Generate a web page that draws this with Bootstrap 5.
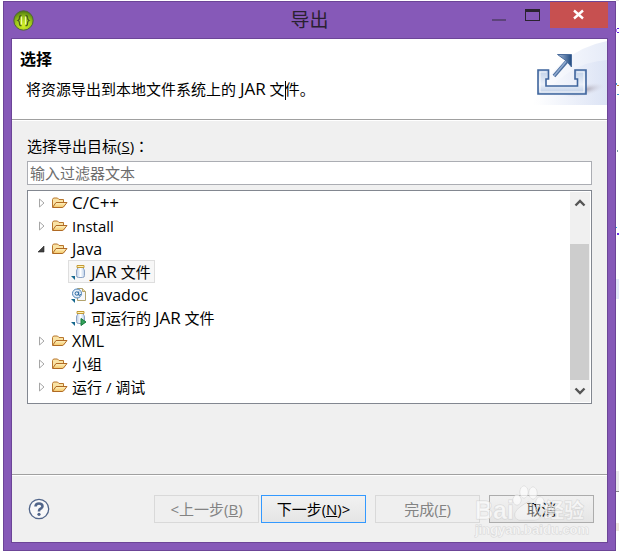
<!DOCTYPE html>
<html lang="zh-CN">
<head>
<meta charset="utf-8">
<meta name="viewport" content="width=device-width, initial-scale=1">
<title>导出</title>
<link href="https://cdn.jsdelivr.net/npm/bootstrap@5.3.0/dist/css/bootstrap.min.css" rel="stylesheet">
<style>
  body { font: 15px/20px "Open Sans", "Noto Sans CJK SC", sans-serif; color: #000; background: #fff; padding: 1px 3px; }
  .latin { font-size: 16px; }
  .caps { font-size: 17px; }
  .wide-colon { font-family: "Noto Sans CJK TC", sans-serif; }
  .window-frame { background: #8659b8; border: 1px solid #6c4597; min-height: calc(100vh - 2px); padding: 0 7px 7px; }
  .title-bar { height: 36px; }
  .app-icon { margin: 8px 0 0 2px; }
  .window-title { font-size: 19px; line-height: 36px; color: #2a2130; }
  .win-controls { height: 26px; }
  .win-controls button { border: 0; padding: 0; background: none; width: 34px; }
  .win-controls .close-btn { background: #c75050; width: 58px; }
  .client-area { border: 1px solid #6c4597; background: #f0f0f0; }
  .banner { background: #fff; border-bottom: 1px solid #a0a0a0; height: 81px; box-shadow: 0 1px #fff; }
  .banner h1 { font-size: 16px; line-height: 20px; margin: 10px 0 10px 8px; font-weight: 700; }
  .banner p { margin-left: 14px; }
  .caret { width: 1px; height: 19px; background: #000; vertical-align: middle; margin-right: -1px; }
  .wizard-body { padding: 16px 15px 0; }
  .filter-label { margin-bottom: 5px; }
  .filter-box { height: 24px; border: 1px solid #abadb3; border-radius: 0; padding: 0 2px; font-size: 15px; line-height: 20px; background: #fff; color: #6d6d6d; }
  .filter-box::placeholder { color: #6d6d6d; }
  .tree-box { border: 1px solid #828790; background: #fff; padding: 0 1px 1px 0; margin-top: 5px; }
  .tree-list li > .tree-row { height: 23px; padding-left: 8px; }
  .tree-row .toggle { border: 0; background: none; padding: 0; width: 12px; height: 23px; margin-right: 3px; }
  .tree-row svg { flex: none; display: block; }
  .tree-row .node-label { margin-left: 4px; white-space: nowrap; }
  .leaf { height: 23px; margin-left: 40px; padding: 0 3px 0 2px; border: 1px solid transparent; }
  .leaf .node-label { margin-left: 4px; white-space: nowrap; }
  .leaf.chosen { background: #f7f7f7; border-color: #dedede; }
  .scroll-rail { width: 20px; background: #f0f0f0; margin-top: 1px; }
  .scroll-rail button { border: 0; background: none; padding: 0; height: 22px; line-height: 0; }
  .scroll-thumb { background: #cdcdcd; flex: 137; margin-right: 1px; }
  .scroll-gap { flex: 30; }
  .footer-bar { border-top: 1px solid #a0a0a0; box-shadow: inset 0 1px #fff; padding: 20px 13px 19px 16px; }
  .help-btn { border: 0; background: none; padding: 0; line-height: 0; }
  .step-pair { gap: 2px; }
  .end-pair { gap: 9px; margin-left: 9px; }
  .dlg-btn { width: 105px; height: 28px; padding: 0; border-radius: 0; border: 1px solid #acacac; font-size: 15px; line-height: 26px; color: #000; background: linear-gradient(#f1f1f1, #e5e5e5); }
  .dlg-btn:disabled { color: #838383; background: #efefef; border-color: #d9d9d9; opacity: 1; }
  .dlg-btn.primary-step { border-color: #3399ff; }
  .stamp { right: 3px; top: 8px; pointer-events: none; }
  .backdrop { right: 0; top: 0; z-index: -1; }
</style>
<script src="https://cdn.jsdelivr.net/npm/bootstrap@5.3.0/dist/js/bootstrap.bundle.min.js"></script>
</head>
<body>
<svg class="backdrop position-absolute" width="3" height="552" aria-hidden="true">
  <path d="M0 0h3v1H0z" fill="#e7e4e4"/><path d="M1 28h2v1H1zM1 32h2v1H1z" fill="#5b20e0"/><path d="M0 29h1v3H0z" fill="#b070ff"/>
  <path d="M0 83h1v2H0zM1 94h2v1H1z" fill="#3c9bd0"/><path d="M1 85h2v1H1z" fill="#c28b3f"/>
  <path d="M1 150h1v2H1z" fill="#7798a0"/><path d="M0 227h1v1H0z" fill="#2aa0f0"/><path d="M1 233h2v2H1z" fill="#6a35e8"/>
  <path d="M0 279h3v20H0z" fill="#e3eafa"/><path d="M0 471h3v20H0z" fill="#eaeaec"/><path d="M0 491h3v1H0z" fill="#888"/><path d="M0 523h3v8H0z" fill="#efe7de"/>
</svg>

<svg class="position-absolute" width="0" height="0" aria-hidden="true">
  <defs>
    <linearGradient id="gFold" x1="0" y1="0" x2="0" y2="1"><stop offset="0" stop-color="#fff3c4"/><stop offset="1" stop-color="#f3c767"/></linearGradient>
    <linearGradient id="gJar"><stop offset="0" stop-color="#b9cbe4"/><stop offset=".5" stop-color="#fff"/><stop offset="1" stop-color="#b9cfe9"/></linearGradient>
    <symbol id="folder" viewBox="0 0 17 16">
      <path d="M1.500 12V4.500L2.500 3h4L8 4.500h4.500V7" fill="#f9e3a5" stroke="#b8762d"/>
      <path d="M1.500 12.500L5 7.500h11L12.500 12Q12 12.500 11 12.500Z" fill="url(#gFold)" stroke="#b06a24" stroke-linejoin="round"/>
    </symbol>
    <symbol id="jar" viewBox="0 0 16 16">
      <path d="M6.500 3.500v1.500Q5.500 5.500 5.500 7v4.500q0 2 2 2h4q2 0 2-2V7q0-1.500-1-2V3.500z" fill="url(#gJar)" stroke="#8ba3c5"/>
      <path d="M6 1.500h7v2H6z" fill="#fff2b5" stroke="#c39a35"/>
      <path d="M0 12h4v4z" fill="#16688e"/>
    </symbol>
    <symbol id="expand" viewBox="0 0 12 12"><path d="M3.500 2v8L8 6z" fill="#fff" stroke="#a6a6a6"/></symbol>
    <symbol id="collapse" viewBox="0 0 12 12"><path d="M8 3v6H2z" fill="#404040" stroke="#262626" stroke-width=".6"/></symbol>
  </defs>
</svg>

<main class="window-frame d-flex flex-column" role="dialog" aria-labelledby="winTitle">
  <header class="title-bar position-relative d-flex justify-content-between align-items-start">
    <svg class="app-icon" width="21" height="21" viewBox="0 0 21 21" aria-hidden="true">
      <defs><radialGradient id="gApp" cx=".5" cy=".75" r=".7"><stop offset="0" stop-color="#d5f024"/><stop offset=".6" stop-color="#9ac51a"/><stop offset="1" stop-color="#57830f"/></radialGradient></defs>
      <circle cx="10.500" cy="10.500" r="9.700" fill="url(#gApp)" stroke="#50643a"/>
      <path d="M8.500 5.500Q6.500 5.500 6.500 7.500T5 10.500Q6.500 11 6.500 13.500T8.500 15.500M12.500 5.500q2 0 2 2T16 10.500q-1.500.5-1.500 3t-2 2" fill="none" stroke="#4a5c1c" stroke-width="1.300"/>
      <path d="M8.500 6.500v8M12.500 6.500v8" stroke="#eff7a8" stroke-width="1.200"/>
    </svg>
    <div id="winTitle" class="window-title position-absolute start-50 translate-middle-x">导出</div>
    <div class="win-controls d-flex me-0">
      <button type="button" aria-label="最小化"><svg width="34" height="26"><path d="M10 17h14v2H10z" fill="#5d437b"/></svg></button>
      <button type="button" aria-label="最大化"><svg width="34" height="26"><path d="M9 7h15v12H9z" fill="#2a2330"/><path d="M10 10h13v8H10z" fill="#8659b8"/></svg></button>
      <button type="button" class="close-btn" aria-label="关闭"><svg width="58" height="26"><path d="M24 8.500l9 8m0-8l-9 8" stroke="#fff" stroke-width="2.400"/></svg></button>
    </div>
  </header>

  <div class="client-area flex-grow-1 d-flex flex-column">
    <section class="banner d-flex justify-content-between">
      <div>
        <h1>选择</h1>
        <p class="mb-0">将资源导出到本地文件系统上的 <span class="caps">JAR</span> 文<span class="caret d-inline-block"></span>件。</p>
      </div>
      <svg width="75" height="66" viewBox="0 0 75 66" aria-hidden="true">
        <defs>
          <linearGradient id="gSky"><stop offset="0" stop-color="#fff"/><stop offset="1" stop-color="#d9e1f4"/></linearGradient>
          <linearGradient id="gArrow"><stop offset="0" stop-color="#a9bddb"/><stop offset="1" stop-color="#214b80"/></linearGradient>
          <linearGradient id="gTray" x1="0" y1="0" x2="0" y2="1"><stop offset="0" stop-color="#bfd0e8"/><stop offset=".6" stop-color="#eaf0f9"/><stop offset="1" stop-color="#b9cae4"/></linearGradient>
          <radialGradient id="gShade"><stop offset="0" stop-color="#a49daa"/><stop offset="1" stop-color="#dfe3f0" stop-opacity="0"/></radialGradient>
        </defs>
        <path d="M0 66Q24 12 75 2V66z" fill="url(#gSky)" opacity=".65"/>
        <path d="M3 66Q35 23 75 21V66z" fill="url(#gSky)" opacity=".8"/>
        <ellipse cx="52" cy="51" rx="22" ry="6" fill="url(#gShade)" transform="rotate(-12 52 51)"/>
        <path d="M6 31H16.500V40H14V47H45.500V40H43V31H54V55H6z" fill="url(#gTray)" stroke="#3f659d" stroke-width="1.600"/>
        <path d="M8 53V33h6.500m30.500 0h7v20H8" fill="none" stroke="#fff" stroke-width="1" opacity=".8"/>
        <path d="M22 37L36 21" stroke="#4c6f9f" stroke-width="3.600"/><path d="M22 37L36 20" stroke="#91abd0" stroke-width="1.500"/>
        <path d="M25.500 15.500H39.500V28L34.500 22z" fill="url(#gArrow)" stroke="#4a6c9c"/>
      </svg>
    </section>

    <section class="wizard-body flex-grow-1">
      <label for="filter" class="filter-label d-block">选择导出目标(<u>S</u>)<span class="wide-colon" lang="zh-TW">：</span></label>
      <input id="filter" type="text" class="filter-box form-control w-100" placeholder="输入过滤器文本">
      <div class="tree-box d-flex">
        <ul class="tree-list list-unstyled mb-0 flex-grow-1 pb-1" role="tree">
          <li role="treeitem" aria-expanded="false"><div class="tree-row d-flex align-items-center"><button type="button" class="toggle" aria-label="展开 C/C++"><svg width="12" height="12"><use href="#expand"/></svg></button><svg width="17" height="16"><use href="#folder"/></svg><span class="node-label caps">C/C++</span></div></li>
          <li role="treeitem" aria-expanded="false"><div class="tree-row d-flex align-items-center"><button type="button" class="toggle" aria-label="展开 Install"><svg width="12" height="12"><use href="#expand"/></svg></button><svg width="17" height="16"><use href="#folder"/></svg><span class="node-label">Install</span></div></li>
          <li role="treeitem" aria-expanded="true"><div class="tree-row d-flex align-items-center"><button type="button" class="toggle" aria-label="折叠 Java"><svg width="12" height="12"><use href="#collapse"/></svg></button><svg width="17" height="16"><use href="#folder"/></svg><span class="node-label latin">Java</span></div>
            <ul class="list-unstyled" role="group">
              <li role="treeitem" aria-selected="true" class="d-flex"><div class="leaf chosen d-flex align-items-center"><svg width="16" height="16"><use href="#jar"/></svg><span class="node-label"><span class="caps">JAR</span> 文件</span></div></li>
              <li role="treeitem" class="d-flex"><div class="leaf d-flex align-items-center">
                <svg width="16" height="16" viewBox="0 0 16 16"><path d="M6.500 1.500h5l3 3v9h-8z" fill="#f5f7fb" stroke="#b2a36d"/><path d="M11.500 1.500v3h3" fill="#f2dc9b" stroke="#b2a36d"/><circle cx="6" cy="6.500" r="4.500" fill="#e4eef8" stroke="#4d83b7"/><path d="M7.700 4.500v3.700q1.500.7 2-1M7.500 6.500a1.700 1.700 0 1 0-3.400 0 1.700 1.700 0 1 0 3.400 0" fill="none" stroke="#27669f"/><path d="M0 12h4v4z" fill="#16688e"/></svg>
                <span class="node-label latin">Javadoc</span></div></li>
              <li role="treeitem" class="d-flex"><div class="leaf d-flex align-items-center">
                <svg width="16" height="16" viewBox="0 0 16 16"><use href="#jar"/><path d="M10 8.500v7l5-3.500z" fill="#35a35b" stroke="#187a3d"/></svg>
                <span class="node-label">可运行的 <span class="caps">JAR</span> 文件</span></div></li>
            </ul>
          </li>
          <li role="treeitem" aria-expanded="false"><div class="tree-row d-flex align-items-center"><button type="button" class="toggle" aria-label="展开 XML"><svg width="12" height="12"><use href="#expand"/></svg></button><svg width="17" height="16"><use href="#folder"/></svg><span class="node-label latin">XML</span></div></li>
          <li role="treeitem" aria-expanded="false"><div class="tree-row d-flex align-items-center"><button type="button" class="toggle" aria-label="展开 小组"><svg width="12" height="12"><use href="#expand"/></svg></button><svg width="17" height="16"><use href="#folder"/></svg><span class="node-label">小组</span></div></li>
          <li role="treeitem" aria-expanded="false"><div class="tree-row d-flex align-items-center"><button type="button" class="toggle" aria-label="展开 运行 / 调试"><svg width="12" height="12"><use href="#expand"/></svg></button><svg width="17" height="16"><use href="#folder"/></svg><span class="node-label">运行 / 调试</span></div></li>
        </ul>
        <div class="scroll-rail d-flex flex-column">
          <button type="button" aria-label="向上滚动"><svg width="12" height="8" viewBox="0 0 12 8"><path d="M1.500 6.500L6 2l4.500 4.500" fill="none" stroke="#555" stroke-width="2.400"/></svg></button>
          <div class="scroll-gap"></div>
          <div class="scroll-thumb"></div>
          <button type="button" aria-label="向下滚动"><svg width="12" height="8" viewBox="0 0 12 8"><path d="M1.500 1.500L6 6l4.500-4.500" fill="none" stroke="#555" stroke-width="2.400"/></svg></button>
        </div>
      </div>
    </section>

    <footer class="footer-bar position-relative d-flex align-items-center">
      <button type="button" class="help-btn me-auto" aria-label="帮助">
        <svg width="22" height="22" viewBox="0 0 22 22"><circle cx="11" cy="11" r="9.700" fill="#f8f8f9" stroke="#51658a" stroke-width="1.300"/><path d="M7.500 8.500Q7.500 5.500 11 5.500T14.500 8.300Q14.500 9.800 12.700 10.700T11 13.500" fill="none" stroke="#51658a" stroke-width="2.600"/><circle cx="11" cy="16.300" r="1.600" fill="#51658a"/></svg>
      </button>
      <div class="step-pair d-flex">
        <button type="button" class="btn dlg-btn" disabled>&lt;上一步(<u>B</u>)</button>
        <button type="button" class="btn dlg-btn primary-step">下一步(<u>N</u>)&gt;</button>
      </div>
      <div class="end-pair d-flex">
        <button type="button" class="btn dlg-btn" disabled>完成(<u>F</u>)</button>
        <button type="button" class="btn dlg-btn">取消</button>
      </div>
      <svg class="stamp position-absolute" width="130" height="56" viewBox="0 0 130 56" font-family="Liberation Sans, Noto Sans CJK SC, sans-serif" font-weight="700" aria-hidden="true">
        <g fill="#fff" fill-opacity=".6" stroke="#cfcfcf" stroke-opacity=".75" stroke-width="1" paint-order="stroke">
          <text x="1" y="36" font-size="25">Bai</text>
          <text x="70" y="35" font-size="20">经验</text>
          <text x="1" y="51" font-size="13">jingyan.baidu.com</text>
          <ellipse cx="43" cy="17" rx="4" ry="5"/><ellipse cx="50" cy="9" rx="4" ry="6"/><ellipse cx="59" cy="10" rx="4" ry="6"/><ellipse cx="66" cy="19" rx="4" ry="5"/>
          <path d="M54 19q4 0 7 5t5 7q1 6-6 6H45q-5-1-4-7 1-3 5-6t8-5z" fill-opacity=".4"/>
        </g>
      </svg>
    </footer>
  </div>
</main>
</body>
</html>
